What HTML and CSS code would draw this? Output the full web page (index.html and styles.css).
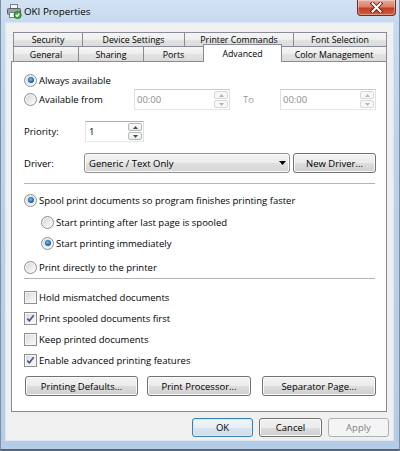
FILE: index.html
```html
<!DOCTYPE html>
<html>
<head>
<meta charset="utf-8">
<title>OKI Properties</title>
<link rel="stylesheet" href="styles.css">
</head>
<body>
<div class="window">
  <div class="titlebar">
    <svg class="app-icon" width="16" height="16" viewBox="0 0 16 16">
      <rect x="4.5" y="1.5" width="7" height="5" fill="#f4f4f4" stroke="#7a7f85"/>
      <rect x="1.5" y="5.5" width="13" height="6" rx="1" fill="#9aa1a8" stroke="#5a6068"/>
      <rect x="3.5" y="9.5" width="8" height="5" fill="#ffffff" stroke="#7a7f85"/>
      <circle cx="11.6" cy="12" r="3.6" fill="#43b03c" stroke="#237a26"/>
      <path d="M9.9 12 L11.1 13.2 L13.3 10.8" stroke="#ffffff" stroke-width="1.3" fill="none"/>
    </svg>
    <span class="title">OKI Properties</span>
    <div class="close-btn">
      <svg width="13" height="11" viewBox="0 0 13 11">
        <path d="M2.5 1.5 L10.5 9.5 M10.5 1.5 L2.5 9.5" stroke="#5a1e17" stroke-width="3.8" stroke-linecap="square" fill="none"/>
        <path d="M2.5 1.5 L10.5 9.5 M10.5 1.5 L2.5 9.5" stroke="#ffffff" stroke-width="2" stroke-linecap="square" fill="none"/>
      </svg>
    </div>
  </div>

  <div class="client">
    <div class="tabs">
      <div class="tab-row back">
        <div class="tab w-security">Security</div>
        <div class="tab w-device">Device Settings</div>
        <div class="tab w-printer">Printer Commands</div>
        <div class="tab w-font">Font Selection</div>
      </div>
      <div class="tab-row front">
        <div class="tab w-general">General</div>
        <div class="tab w-sharing">Sharing</div>
        <div class="tab w-ports">Ports</div>
        <div class="tab w-advanced selected">Advanced</div>
        <div class="tab w-color">Color Management</div>
      </div>
    </div>

    <div class="panel">
      <div class="row row-always">
        <span class="radio"><span class="dot"></span></span>
        <span class="label">Always available</span>
      </div>

      <div class="row row-from">
        <div class="from-choice">
          <span class="radio"></span>
          <span class="label">Available from</span>
        </div>
        <div class="spin-field time disabled">
          <span class="field-text">00:00</span>
          <div class="spinner">
            <span class="spin-btn"><svg class="arrow" width="5" height="3" viewBox="0 0 5 3"><path d="M0 3 L2.5 0 L5 3Z"/></svg></span>
            <span class="spin-btn"><svg class="arrow" width="5" height="3" viewBox="0 0 5 3"><path d="M0 0 L5 0 L2.5 3Z"/></svg></span>
          </div>
        </div>
        <span class="to-label">To</span>
        <div class="spin-field time disabled">
          <span class="field-text">00:00</span>
          <div class="spinner">
            <span class="spin-btn"><svg class="arrow" width="5" height="3" viewBox="0 0 5 3"><path d="M0 3 L2.5 0 L5 3Z"/></svg></span>
            <span class="spin-btn"><svg class="arrow" width="5" height="3" viewBox="0 0 5 3"><path d="M0 0 L5 0 L2.5 3Z"/></svg></span>
          </div>
        </div>
      </div>

      <div class="row row-priority">
        <span class="field-label">Priority:</span>
        <div class="spin-field priority">
          <span class="field-text">1</span>
          <div class="spinner">
            <span class="spin-btn"><svg class="arrow" width="5" height="3" viewBox="0 0 5 3"><path d="M0 3 L2.5 0 L5 3Z"/></svg></span>
            <span class="spin-btn"><svg class="arrow" width="5" height="3" viewBox="0 0 5 3"><path d="M0 0 L5 0 L2.5 3Z"/></svg></span>
          </div>
        </div>
      </div>

      <div class="row row-driver">
        <span class="field-label">Driver:</span>
        <div class="combo">
          <span class="combo-text">Generic / Text Only</span>
          <svg class="combo-arrow" width="7" height="4" viewBox="0 0 7 4"><path d="M0 0 L7 0 L3.5 4Z"/></svg>
        </div>
        <button class="btn btn-new-driver">New Driver...</button>
      </div>

      <div class="sep sep-top"></div>

      <div class="row row-spool">
        <span class="radio"><span class="dot"></span></span>
        <span class="label">Spool print documents so program finishes printing faster</span>
      </div>
      <div class="row sub row-sub1">
        <span class="radio"></span>
        <span class="label">Start printing after last page is spooled</span>
      </div>
      <div class="row sub row-sub2">
        <span class="radio"><span class="dot"></span></span>
        <span class="label">Start printing immediately</span>
      </div>
      <div class="row row-direct">
        <span class="radio"></span>
        <span class="label">Print directly to the printer</span>
      </div>

      <div class="sep sep-bottom"></div>

      <div class="row check-row first-check">
        <span class="check"></span>
        <span class="label">Hold mismatched documents</span>
      </div>
      <div class="row check-row">
        <span class="check"><svg width="11" height="11" viewBox="0 0 11 11"><path d="M2.3 5.6 L4.4 7.8 L8.7 2.3" stroke="#3f558c" stroke-width="1.6" fill="none"/></svg></span>
        <span class="label">Print spooled documents first</span>
      </div>
      <div class="row check-row">
        <span class="check"></span>
        <span class="label">Keep printed documents</span>
      </div>
      <div class="row check-row">
        <span class="check"><svg width="11" height="11" viewBox="0 0 11 11"><path d="M2.3 5.6 L4.4 7.8 L8.7 2.3" stroke="#3f558c" stroke-width="1.6" fill="none"/></svg></span>
        <span class="label">Enable advanced printing features</span>
      </div>

      <div class="panel-buttons">
        <button class="btn btn-defaults">Printing Defaults...</button>
        <button class="btn btn-processor">Print Processor...</button>
        <button class="btn btn-separator">Separator Page...</button>
      </div>
    </div>

    <div class="dialog-buttons">
      <button class="btn btn-dialog btn-ok">OK</button>
      <button class="btn btn-dialog btn-cancel">Cancel</button>
      <button class="btn btn-dialog btn-apply" disabled>Apply</button>
    </div>
  </div>
</div>
</body>
</html>
```

FILE: styles.css
```css
* {
  box-sizing: border-box;
}

html, body {
  margin: 0;
  padding: 0;
}

body {
  width: 400px;
  height: 451px;
  overflow: hidden;
  background: #b9cfe8;
  font-family: "Open Sans", "Liberation Sans", sans-serif;
  font-size: 9.5px;
  color: #000;
}

.window {
  width: 400px;
  height: 451px;
  display: flex;
  flex-direction: column;
  background: linear-gradient(180deg, #d2e2f4 0px, #c6daef 22px, #bcd2ea 140px, #b5cce6 100%);
  border-left: 1px solid #7d8fa7;
  border-right: 1px solid #7d8fa7;
  border-bottom: 2px solid #56657a;
}

/* Title bar */
.titlebar {
  flex: 0 0 22px;
  height: 22px;
  display: flex;
  align-items: center;
}

.app-icon {
  flex: 0 0 16px;
  margin-left: 5px;
}

.title {
  margin-left: 2px;
  font-size: 9.8px;
  color: #000;
}

.close-btn {
  align-self: flex-start;
  margin-left: auto;
  margin-right: 3px;
  width: 39px;
  height: 16px;
  border: 1px solid #6a2f27;
  border-top: none;
  border-radius: 0 0 4px 4px;
  background: linear-gradient(180deg, #e9aa9a 0%, #da7f6a 45%, #c43d26 55%, #d0603f 100%);
  box-shadow: inset 0 0 0 1px rgba(255, 255, 255, 0.35);
  display: flex;
  align-items: center;
  justify-content: center;
}

/* Client area */
.client {
  margin-left: 4px;
  width: 389px;
  height: 419px;
  border: 1px solid #dbe6f2;
  background: #f0f0f0;
  display: flex;
  flex-direction: column;
}

/* Tabs */
.tabs {
  padding: 9px 0 0 7px;
}

.tab-row {
  display: flex;
  align-items: flex-start;
}

.tab-row.back {
  height: 14px;
}

.tab-row.front {
  height: 15px;
}

.tab {
  border: 1px solid #898c95;
  border-bottom: none;
  margin-left: -1px;
  background: linear-gradient(180deg, #f5f5f5 0%, #eeeeee 50%, #e3e3e3 51%, #dcdcdc 100%);
  display: flex;
  align-items: center;
  justify-content: center;
  padding-top: 1px;
  font-size: 8.8px;
  white-space: nowrap;
}

.tab:first-child {
  margin-left: 0;
}

.back .tab {
  height: 14px;
}

.front .tab {
  height: 15px;
}

.w-security { width: 70px; }
.w-device { width: 103px; }
.w-printer { width: 110px; }
.w-font { width: 94px; }
.w-general { width: 66px; }
.w-sharing { width: 66px; }
.w-ports { width: 61px; }
.w-advanced { width: 79px; }
.w-color { width: 106px; }

.front .tab.selected {
  position: relative;
  z-index: 1;
  height: 18px;
  margin-top: -2px;
  background: #ffffff;
  padding-top: 0;
}

/* Panel */
.panel {
  margin-left: 5px;
  width: 376px;
  border: 1px solid #898c95;
  background: #ffffff;
  padding: 9px 10px 15px 12px;
  display: flex;
  flex-direction: column;
}

.row {
  display: flex;
  align-items: center;
  white-space: nowrap;
}

.row-always { height: 18px; }
.row-from { height: 21px; }
.row-priority { height: 21px; margin-top: 11px; }
.row-driver { height: 20px; margin-top: 11px; }
.row-spool { height: 20px; margin-top: 6px; }
.row-sub1 { height: 20px; margin-top: 2px; }
.row-sub2 { height: 20px; margin-top: 1px; }
.row-direct { height: 20px; margin-top: 4px; }

.sub {
  padding-left: 17px;
}

.label {
  margin-left: 2px;
}

.sep {
  height: 1px;
  background: #b4b4b4;
  margin-right: 1px;
}

.sep-top { margin-top: 10px; }
.sep-bottom { margin-top: 1px; }

/* Radio buttons */
.radio {
  flex: 0 0 13px;
  width: 13px;
  height: 13px;
  border-radius: 50%;
  border: 1px solid #8e8f8f;
  background: linear-gradient(135deg, #d0d0d0 0%, #ececec 55%, #fbfbfb 100%);
  box-shadow: inset 0 0 0 1px #f6f6f6;
  display: flex;
  align-items: center;
  justify-content: center;
}

.dot {
  width: 6px;
  height: 6px;
  border-radius: 50%;
  background: radial-gradient(circle at 45% 40%, #7cc6f0 0%, #2f7fc4 40%, #1a4f8e 80%, #173f70 100%);
}

/* Checkboxes */
.check {
  flex: 0 0 13px;
  width: 13px;
  height: 13px;
  border: 1px solid #8e8f8f;
  background: linear-gradient(135deg, #d6d6d6 0%, #ededed 55%, #fbfbfb 100%);
  box-shadow: inset 0 0 0 1px #f6f6f6;
  display: flex;
  align-items: center;
  justify-content: center;
}

.check-row {
  height: 21px;
}

.first-check {
  margin-top: 8px;
}

/* Spin fields */
.from-choice {
  flex: 0 0 110px;
  display: flex;
  align-items: center;
}

.spin-field {
  height: 21px;
  background: #ffffff;
  border: 1px solid #abadb3;
  border-color: #abadb3 #dbdfe6 #e3e9ef #e2e3ea;
  display: flex;
  align-items: center;
  padding-left: 2px;
}

.spin-field.time {
  flex: 0 0 96px;
  width: 96px;
}

.spin-field.disabled {
  border-color: #c8cbd0 #dcdfe3 #e3e6ea #dcdfe3;
  color: #8d8d8d;
}

.spin-field.priority {
  flex: 0 0 59px;
  width: 59px;
  margin-left: 1px;
  padding-left: 3px;
}

.spinner {
  margin-left: auto;
  margin-right: 1px;
  width: 14px;
  height: 17px;
  display: flex;
  flex-direction: column;
  gap: 1px;
}

.spin-btn {
  flex: 1;
  border: 1px solid #b4b7bc;
  border-radius: 2px;
  background: linear-gradient(180deg, #fafafa 0%, #ececec 100%);
  display: flex;
  align-items: center;
  justify-content: center;
  color: #4a4a4a;
}

.disabled .spin-btn {
  border-color: #d6d8db;
  background: #f7f7f7;
  color: #b8b8b8;
}

.arrow {
  fill: currentColor;
  display: block;
}

.to-label {
  flex: 0 0 50px;
  width: 50px;
  padding-left: 13px;
  color: #9a9a9a;
}

.field-label {
  flex: 0 0 60px;
  width: 60px;
}

/* Combo box */
.combo {
  flex: 0 0 206px;
  width: 206px;
  height: 20px;
  border: 1px solid #8e8f8f;
  border-radius: 3px;
  background: linear-gradient(180deg, #f4f4f4 0%, #ececec 50%, #e0e0e0 51%, #d5d5d5 100%);
  box-shadow: inset 0 0 0 1px #fbfbfb;
  display: flex;
  align-items: center;
  padding: 0 3px 0 4px;
}

.combo-arrow {
  margin-left: auto;
  fill: #000;
}

/* Buttons */
.btn {
  font: inherit;
  color: #000;
  margin: 0;
  padding: 0;
  height: 20px;
  border: 1px solid #707070;
  border-radius: 3px;
  background: linear-gradient(180deg, #f2f2f2 0%, #ebebeb 50%, #dddddd 51%, #cfcfcf 100%);
  box-shadow: inset 0 0 0 1px #fbfbfb;
  display: flex;
  align-items: center;
  justify-content: center;
  white-space: nowrap;
}

.btn-new-driver {
  flex: 0 0 83px;
  width: 83px;
  margin-left: 3px;
}

.panel-buttons {
  margin-top: 5px;
  height: 20px;
  display: flex;
}

.btn-defaults {
  width: 113px;
  margin-left: 1px;
}

.btn-processor {
  width: 104px;
  margin-left: 9px;
}

.btn-separator {
  width: 114px;
  margin-left: 11px;
}

.dialog-buttons {
  margin-top: 6px;
  padding-right: 4px;
  display: flex;
  justify-content: flex-end;
  gap: 6px;
}

.btn-dialog {
  height: 19px;
}

.btn-ok {
  width: 61px;
  border-color: #3c7fb1;
  background: linear-gradient(180deg, #f1f7fb 0%, #e6eff5 50%, #d9e5ee 51%, #cfdce7 100%);
  box-shadow: inset 0 0 0 1px #d3ecfa;
}

.btn-cancel {
  width: 63px;
}

.btn-apply {
  width: 61px;
  border-color: #adb2b5;
  background: #f4f4f4;
  box-shadow: none;
  color: #838383;
}
```
